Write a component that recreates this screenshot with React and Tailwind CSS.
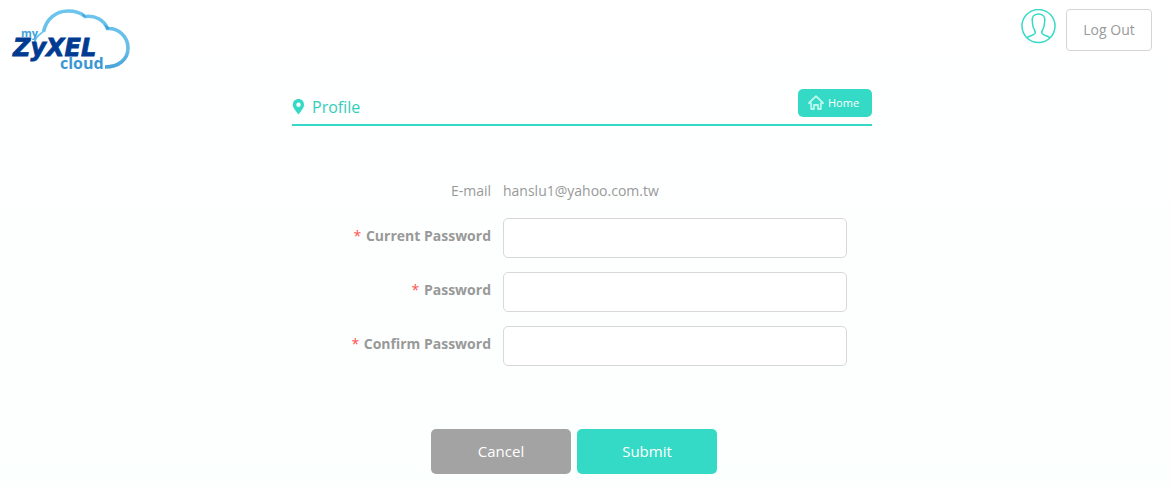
import React from "react";

function Logo() {
  return (
    <svg width="122" height="68" viewBox="10 8 122 68" role="img" aria-label="my ZyXEL cloud">
      <defs>
        <linearGradient id="cloud" x1="0" y1="0" x2="0" y2="1">
          <stop offset="0" stopColor="#6cc5ee" />
          <stop offset="0.7" stopColor="#66bde7" />
          <stop offset="1" stopColor="#4ba3d9" />
        </linearGradient>
      </defs>
      <g fill="none" stroke="url(#cloud)">
        <path d="M43.500 32C46 19 56 11 68 11C75 11 81 13 85 16.500C95 15 104 20 107.500 28.500C119 28 128 37 128 48C128 60 118 67 105 67" strokeWidth="3.600" />
        <path d="M44 31C41 34 36.500 35 34.500 42" strokeWidth="1.600" />
      </g>
      <path d="M82 13l5 4.500l-4 -1zM104 24l6 4l-3 2z" fill="#3d9fda" />
      <text x="21" y="37" fontSize="11" fontWeight="700" fill="#3ba2db" fontFamily="'Open Sans', sans-serif">my</text>
      <text x="13" y="56" fontSize="24" fontWeight="700" fontStyle="italic" fill="#003b92" stroke="#003b92" strokeWidth="0.800" fontFamily="'DejaVu Sans', sans-serif">ZyXEL</text>
      <text x="60" y="69" fontSize="16" fontWeight="700" fill="#3b97d3" fontFamily="'Open Sans', sans-serif">cloud</text>
    </svg>
  );
}

function Avatar() {
  return (
    <svg width="36" height="36" viewBox="0 0 36 36" fill="none" stroke="#34dac5" strokeWidth="1.500" aria-hidden="true">
      <circle cx="18.500" cy="17" r="16.500" />
      <path d="M7 29C8 27 14 26.500 15 24.500C15.500 23 15.500 22.500 14.500 21C13 19 12.600 16.500 12.400 13.500C11.500 8 13.500 5 18.500 5S25.500 8 24.600 13.500C24.400 16.500 24 19 22.500 21C21.500 22.500 21.500 23 22 24.500C23 26.500 29 27 30 29" />
    </svg>
  );
}

function Field({ id, label }) {
  return (
    <div className="flex">
      <label htmlFor={id} className="w-[199px] pt-2 text-right text-sm font-bold">
        <span className="mr-px font-normal text-[#ff5050]">*</span> {label}
      </label>
      <input id={id} type="password" className="ml-3 h-10 w-[344px] rounded-[5px] border border-[#d8d8d8] bg-white px-3 outline-none" />
    </div>
  );
}

export default function App() {
  return (
    <div className="min-h-screen bg-linear-to-b from-white to-[#fbfffe] font-['Open_Sans',sans-serif] text-[#999999]">
      <header className="flex h-[76px] items-start justify-between pt-2 pr-[18px] pl-2.5">
        <a href="#home"><Logo /></a>
        <div className="flex gap-2.5 pt-px">
          <a href="#profile" aria-label="Account"><Avatar /></a>
          <button type="button" className="h-[42px] w-[86px] rounded-[4px] border border-[#d5d5d5] bg-white text-sm">Log Out</button>
        </div>
      </header>
      <main className="pt-[13px] pr-1.5 pb-3">
        <div className="mx-auto max-w-[580px]">
          <div className="flex h-[37px] items-start justify-between border-b-2 border-[#34dac5]">
            <h1 className="flex items-center gap-2 pt-1.5 text-base text-[#34cdb9]">
              <svg width="12" height="16" viewBox="0 0 12 16" fill="#34dac5" aria-hidden="true">
                <path fillRule="evenodd" d="M6.500 0C3 0 0.800 2.600 0.800 5.800C0.800 9 4 12 6.500 15.500C9 12 12 9 12 5.800C12 2.600 10 0 6.500 0ZM6.500 3.600A2.200 2.200 0 1 1 6.500 8A2.200 2.200 0 0 1 6.500 3.600Z" />
              </svg>
              Profile
            </h1>
            <a href="#home" className="flex h-7 w-[74px] items-center gap-1 rounded-[5px] bg-[#34dac5] pl-2.5 text-[11px] text-white">
              <svg width="16" height="16" viewBox="0 0 16 16" fill="none" stroke="#b9f7ee" strokeWidth="1.800" strokeLinejoin="round" aria-hidden="true">
                <path d="M1 8L8 1.200L15 8L12.800 8.500V14H10V10H6V14H3.200V8.500Z" />
              </svg>
              Home
            </a>
          </div>
          <form className="pt-[55px]" onSubmit={(e) => e.preventDefault()}>
            <div className="mb-[17px] flex text-sm">
              <span className="w-[199px] text-right">E-mail</span>
              <span className="ml-3">hanslu1@yahoo.com.tw</span>
            </div>
            <div className="flex flex-col gap-3.5">
              <Field id="current" label="Current Password" />
              <Field id="password" label="Password" />
              <Field id="confirm" label="Confirm Password" />
            </div>
            <div className="mt-[63px] flex justify-center gap-1.5 pr-4">
              <button type="button" className="h-[45px] w-[140px] rounded-[5px] bg-[#a3a3a3] text-[15px] text-white">Cancel</button>
              <button type="submit" className="h-[45px] w-[140px] rounded-[5px] bg-[#34dac5] text-[15px] text-white">Submit</button>
            </div>
          </form>
        </div>
      </main>
    </div>
  );
}
